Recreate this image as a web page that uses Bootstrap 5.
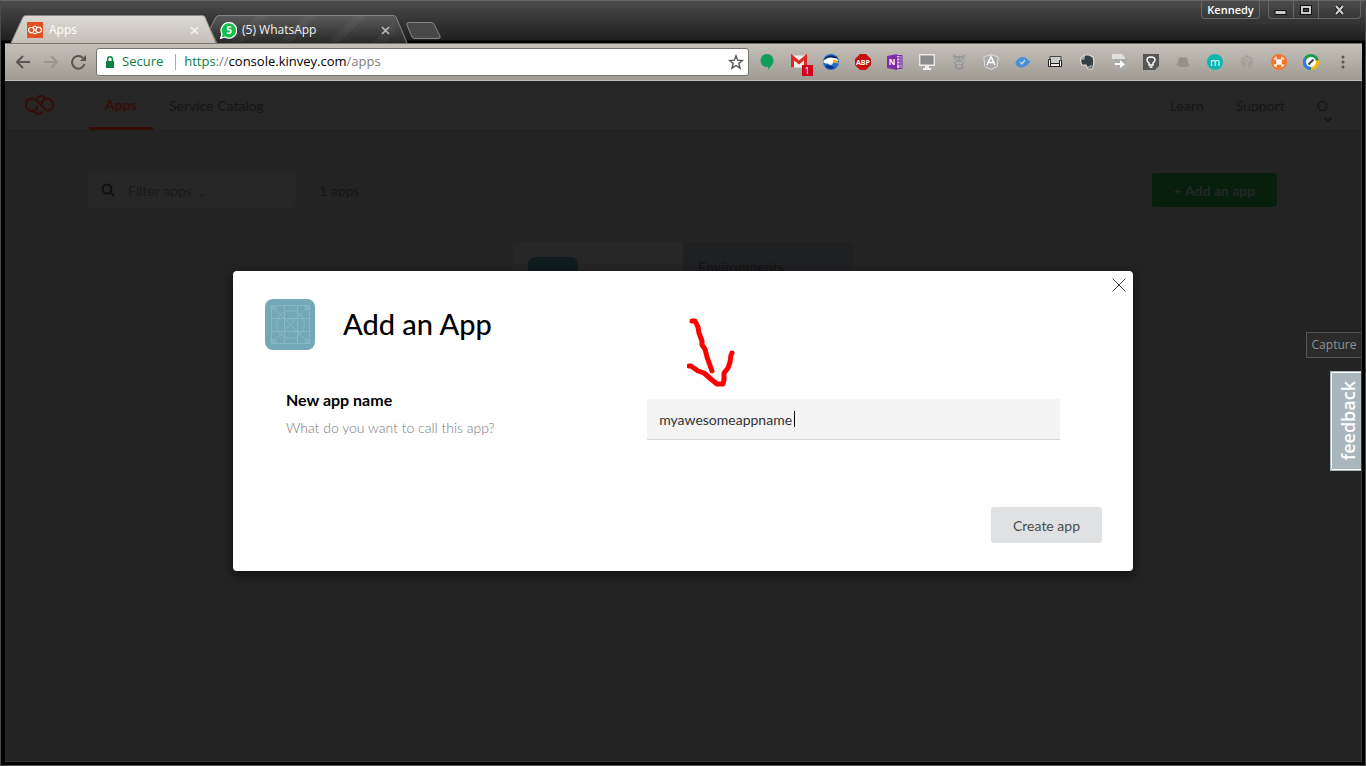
<!DOCTYPE html>
<html lang="en">
<head>
<meta charset="utf-8">
<meta name="viewport" content="width=device-width, initial-scale=1">
<title>Apps</title>
<link href="https://cdn.jsdelivr.net/npm/bootstrap@5.3.0/dist/css/bootstrap.min.css" rel="stylesheet">
<style>
  body { font-family: Lato, "Open Sans", sans-serif; font-size: 14px; background: #000; }
  button { font: inherit; }
  .window { background: #000; border: 1px solid #4a4a4a; border-top-color: #666; }
  .ui-font { font-family: "Open Sans", "Noto Sans", sans-serif; }
  .plain { background: none; border: 0; padding: 0; line-height: 0; }

  /* title bar */
  .titlebar { height: 42px; background: linear-gradient(#4b4b4b, #1f1f1f 39px, #000 40px); }
  .tabs { padding: 14px 0 0 10px; }
  .tab { height: 28px; padding: 2px 18px 0 16px; gap: 6px; font-size: 12px; color: #fff; }
  .tab-on { width: 206px; z-index: 1; }
  .tab-off { width: 198px; margin-left: -7px; padding-left: 10px; gap: 5px; color: #f0f0f0; }
  .tab-shape { inset: 0; width: 100%; height: 100%; z-index: -1; }
  .tab-off, .tab-on { isolation: isolate; }
  .new-tab { margin: 7px 0 0 -2px; }
  .caption { height: 18px; border: 1px solid #666; border-top: 0; border-radius: 0 0 4px 4px; }
  .caption button { display: block; height: 17px; color: #ccc; }
  .caption button + button { border-left: 1px solid #666; }
  .caption .user { width: 57px; font-size: 11px; font-weight: 600; line-height: 17px; color: #fff; }

  /* toolbar */
  .toolbar { height: 38px; margin: 0 3px 0 4px; padding: 0 11px 0 10px; background: linear-gradient(#c5c0b9, #9f9b93); border-top: 1px solid #77736d; border-bottom: 1px solid #b9bdb9; }
  .toolbar svg { display: block; }
  .moves { gap: 13px; }
  .address { height: 28px; background: #fff; border: 1px solid #77746e; border-radius: 3px; font-size: 13px; margin: 0 10px; padding: 0 4px 0 9px; }
  .secure { color: #0b8043; }
  .split { width: 1px; height: 16px; background: #aaa; }
  .url .dim { color: #808080; }

  /* page under the dialog */
  .page { margin: 0 3px 3px 4px; background: #232323; border-right: 1px solid #3a3a3a; border-bottom: 1px solid #3a3a3a; color: #151515; }
  .site-nav { height: 50px; padding: 0 33px 0 20px; background: #262626; border-bottom: 1px solid #202020; }
  .site-nav a { color: #151515; text-decoration: none; padding-bottom: 1px; }
  .site-nav a.current { width: 64px; margin-left: 35px; color: #340d07; font-weight: 700; border-bottom: 3px solid #340d07; padding-bottom: 0; }
  .content { padding: 42px 84px 0; }
  .filter { width: 206px; height: 34px; border: 1px solid #282828; border-radius: 3px; background: #262626; padding: 0 11px; }
  .filter input { background: none; border: 0; min-width: 0; outline: 0; padding: 0 1px; }
  .filter input::placeholder { color: #191919; opacity: 1; }
  .add { width: 125px; height: 34px; border: 0; border-radius: 3px; background: #081f0e; color: #262626; font-weight: 700; }
  .app-tile { width: 340px; height: 150px; margin-top: 35px; }
  .app-tile > div { padding: 15px; }
  .tile-left { background: #262626; }
  .app-tile > .tile-right { padding-top: 14px; background: #1f2022; font-weight: 700; color: #141517; }
  .tile-icon { width: 50px; height: 50px; border-radius: 8px; background: #101c1e; }

  /* dialog */
  .overlay { inset: 0; }
  .dialog { width: 900px; padding: 28px 31px 28px 32px; background: #fff; border-radius: 4px; box-shadow: 0 4px 12px #0009; color: #000; }
  .dialog h1 { font-size: 29px; font-weight: 500; margin: 0; }
  .dialog-close { top: 6px; right: 6px; }
  .fields { display: grid; grid-template-columns: 7fr 8fr; margin: 49px 42px 0 21px; }
  .fields label { font-size: 16px; font-weight: 700; line-height: 20px; margin-top: -9px; }
  .hint { color: #777; font-weight: 300; line-height: 20px; margin-top: 8px; }
  .name-box { height: 41px; background: #f4f4f4; border: 0; border-bottom: 1px solid #d8d8d8; border-radius: 0; padding: 0 12px; color: #333; outline: 0; caret-color: transparent; }
  .text-cursor { left: 147px; top: 12px; width: 1px; height: 16px; background: #000; }
  .create { width: 111px; height: 36px; margin-top: 67px; border: 0; border-radius: 3px; background: #dfe1e3; color: #4c4c4c; }
  .pointer { left: 454px; top: 46px; }

  .capture { right: 0; top: 251px; height: 26px; width: 55px; border: 1px solid #555; border-right: 0; background: #2b2b2b; color: #929292; font-size: 12px; padding: 0; }
  .feedback { right: 0; top: 290px; width: 31px; height: 100px; background: #a9b7bd; border: 1px solid #a9b7bd; border-right: 0; padding: 1px 0 1px 1px; }
  .feedback span { display: flex; align-items: center; justify-content: center; height: 100%; box-shadow: -1px 0 #fff, 0 -1px #fff, 0 1px #fff; color: #fff; font-size: 18px; line-height: 1; padding-left: 3px; }
  .feedback b { writing-mode: vertical-rl; rotate: 180deg; font-weight: 600; }
</style>
</head>
<body>
<div class="window min-vh-100 d-flex flex-column">
  <header class="titlebar d-flex justify-content-between ui-font">
    <div class="tabs d-flex">
      <div class="tab tab-on position-relative d-flex align-items-center">
        <svg class="tab-shape position-absolute" viewBox="0 0 206 28" preserveAspectRatio="none"><defs><linearGradient id="on" x2="0" y2="1"><stop stop-color="#dcd9d3"/><stop offset="1" stop-color="#c5c0b9"/></linearGradient></defs><path d="M0 28L12 2Q13 .5 15 .5H191Q193 .5 194 2L205 28" fill="url(#on)" stroke="#8d8a84"/></svg>
        <svg width="16" height="16" viewBox="0 0 16 16"><path fill="#e05020" d="M0 0h16v16H0z"/><path d="M6 10.500C4 11.500 1.500 10 1.500 8S4 4.800 6 6l4 4c2 1.500 4.500 0 4.500-2S12 4.500 10 5.500M6 5.500Q8 3 10 5.500L9 8M10 10.500Q8 13 6 10.500L7 8" fill="none" stroke="#fff" stroke-width="1.200"/></svg>
        <span class="flex-grow-1">Apps</span>
        <button class="plain" aria-label="Close tab"><svg width="9" height="9" viewBox="0 0 9 9" stroke="#f4f4f4" stroke-width="1.600"><path d="M1 1l7 7M8 1L1 8"/></svg></button>
      </div>
      <div class="tab tab-off position-relative d-flex align-items-center">
        <svg class="tab-shape position-absolute" viewBox="0 0 200 28" preserveAspectRatio="none"><defs><linearGradient id="off" x2="0" y2="1"><stop stop-color="#5c5c5c"/><stop offset="1" stop-color="#282828"/></linearGradient></defs><path d="M7 28L0 14 6 2Q7 .5 9 .5H185Q187 .5 188 2L199 28" fill="url(#off)" stroke="#858585"/><path d="M20 27L46 1h12L32 27M70 27L96 1h12L82 27M120 27l26-26h12l-26 26M165 27l20-20 3 9-11 11" fill="#fff" opacity=".04"/></svg>
        <svg width="17" height="17" viewBox="0 0 17 17"><path d="M9 .700a7.700 7.700 0 11-4 14.300L.7 16.300 2 12A7.700 7.700 0 019 .700z" fill="#12bf48" stroke="#fff" stroke-width="1.300"/><text x="9" y="12" text-anchor="middle" font-family="Open Sans" font-size="10" font-weight="700" fill="#fff">5</text></svg>
        <span class="flex-grow-1">(5) WhatsApp</span>
        <button class="plain" aria-label="Close tab"><svg width="9" height="9" viewBox="0 0 9 9" stroke="#bbb" stroke-width="1.600"><path d="M1 1l7 7M8 1L1 8"/></svg></button>
      </div>
      <button class="plain new-tab d-flex align-self-start" aria-label="New tab"><svg width="36" height="17" viewBox="0 0 36 17"><path d="M3 .5H25Q27 .5 28 2L34 14Q35 16.500 32 16.500H9Q7 16.500 6 15L1 3Q0 .5 3 .5z" fill="#484848" stroke="#858585"/></svg></button>
    </div>
    <div class="d-flex align-items-start gap-2 pe-1">
      <div class="caption"><button class="plain user">Kennedy</button></div>
      <div class="caption d-flex">
        <button class="plain px-1" aria-label="Minimize"><svg width="16" height="14" viewBox="0 0 16 14"><path d="M2 7.500h11v4H2z" fill="#ccc" stroke="#111"/></svg></button>
        <button class="plain px-1" aria-label="Maximize"><svg width="16" height="14" viewBox="0 0 16 14"><path d="M4 4h8v6H4z" fill="none" stroke="#111" stroke-width="4"/><path d="M4 4h8v6H4z" fill="none" stroke="#ccc" stroke-width="2"/></svg></button>
        <button class="plain px-2" aria-label="Close window"><svg width="25" height="14" viewBox="0 0 25 14"><path d="M9 3l7 8M16 3l-7 8" stroke="#111" stroke-width="4"/><path d="M9 3l7 8M16 3l-7 8" stroke="#ccc" stroke-width="2.200"/></svg></button>
      </div>
    </div>
  </header>

  <div class="toolbar d-flex align-items-center ui-font">
    <div class="moves d-flex align-items-center">
      <button class="plain" aria-label="Back"><svg width="16" height="16" viewBox="0 0 16 16" fill="none" stroke="#595651" stroke-width="2"><path d="M15 8H2M8 2L2 8l6 6"/></svg></button>
      <button class="plain" aria-label="Forward"><svg width="14" height="16" viewBox="0 0 14 16" fill="none" stroke="#9b978f" stroke-width="2"><path d="M0 8h12M7 2l6 6-6 6"/></svg></button>
      <button class="plain" aria-label="Reload"><svg width="15" height="16" viewBox="0 0 15 16" fill="none" stroke="#595651" stroke-width="2"><path d="M12 4A6.300 6.300 0 1013.500 10"/><path d="M15 1v6H9z" fill="#595651" stroke="none"/></svg></button>
    </div>
    <div class="address flex-grow-1 d-flex align-items-center gap-2">
      <svg width="8" height="12" viewBox="0 0 8 12"><path d="M0 5h8v7H0z" fill="#0b8043"/><path d="M1.700 5V3a2.300 2.300 0 014.600 0v2" fill="none" stroke="#0b8043" stroke-width="1.400"/></svg>
      <span class="secure">Secure</span>
      <span class="split ms-1"></span>
      <span class="url flex-grow-1" role="textbox" aria-label="Address"><span class="secure">https</span><span class="dim">://</span><span class="text-black">console.kinvey.com</span><span class="dim">/apps</span></span>
      <svg width="16" height="16" viewBox="0 0 16 16" fill="none" stroke="#555" stroke-width="1.400"><path d="M8 1.800l1.700 4.400 4.700.3-3.600 3 1.200 4.600L8 11.500l-4 2.600 1.200-4.600-3.600-3 4.700-.3z"/></svg>
    </div>
    <div class="d-flex gap-3 align-items-center">
      <svg width="16" height="16" viewBox="0 0 16 16"><path d="M8 0c4 0 6.500 3 6.500 6.500 0 4-3.500 6.500-5.500 9.500v-3C4 13 1.500 10 1.500 6.500S4 0 8 0z" fill="#0f9d58"/></svg>
      <svg width="16" height="16" viewBox="0 0 16 16" overflow="visible"><path d="M0 1.500h16v12H0z" fill="#eee"/><path d="M1.500 13.500V3L8 8.500 14.500 3v10.500" fill="none" stroke="#dd2a22" stroke-width="3"/><path d="M11 11h11v11H11z" fill="#d0021b"/><text x="16" y="20" text-anchor="middle" font-family="Open Sans" font-size="9" fill="#fff">1</text></svg>
      <svg width="16" height="16" viewBox="0 0 16 16"><circle cx="8" cy="8" r="8" fill="#1b6fd0"/><path d="M1 5Q6-1 14 3l1 3-6 1Q4 4 1 5z" fill="#0a2350"/><path d="M0 8Q4 2 11 4q4 0 4 3l-5 1q0 3-3 3 0-2-4-1.500z" fill="#fff"/><path d="M10 6q5-1 5.500 4-2-2-5-1z" fill="#f5a722"/><path d="M3 11q5 1 9 2-4 4-9 0z" fill="#0a2f70"/></svg>
      <svg width="16" height="16" viewBox="0 0 16 16"><path d="M5 0h6l5 5v6l-5 5H5l-5-5V5z" fill="#c70d0d"/><text x="8" y="11" text-anchor="middle" font-family="Open Sans" font-size="7" font-weight="700" fill="#fff">ABP</text></svg>
      <svg width="16" height="16" viewBox="0 0 16 16"><path d="M8 1.500h7v13H8" fill="#d9c5e8" stroke="#7b2fa5"/><path d="M10 4h5M10 7h5M10 10h5M13 2v12" stroke="#7b2fa5"/><path d="M0 2l10-2v16L0 14z" fill="#7d2da8"/><text x="5" y="11" text-anchor="middle" font-family="Open Sans" font-size="8" font-weight="700" fill="#fff">N</text></svg>
      <svg width="16" height="16" viewBox="0 0 16 16"><path d="M.7.700h14.600v10.600H.7z" fill="#8c8c8c" stroke="#e8e8e8" stroke-width="1.400"/><path d="M6 12h4v2h2v2H4v-2h2z" fill="#eee"/></svg>
      <svg width="16" height="16" viewBox="0 0 16 16"><path d="M3 0l2 2h6l2-2 1 3-2 2 2 3-2 2 1 4-3 2H6l-3-2 1-4-2-2 2-3-2-2z" fill="#999"/><path d="M5 5h2M9 5h2M5 9h6M6 12h4M3 7h2M11 7h2" stroke="#c4c4c4"/></svg>
      <svg width="16" height="16" viewBox="0 0 16 16"><path d="M8 .5l7.200 2.500-1 9.500L8 15.500 1.800 12.500.8 3z" fill="#aaa" stroke="#ddd"/><path d="M4 11l4-8.500 4 8.500M5.500 8.500h5" fill="none" stroke="#fff" stroke-width="1.500"/></svg>
      <svg width="16" height="16" viewBox="0 0 16 16"><path d="M2 6Q6 1 11 4l4.500 4L11 12q-5 3-9 0-3-3 0-6z" fill="#4590d8"/><path d="M5 8l2 2 3-4" fill="none" stroke="#c9d8e4" stroke-width="1.300"/></svg>
      <svg width="16" height="16" viewBox="0 0 16 16"><path d="M3 9V2.500h11V9" fill="#ccc" stroke="#444"/><path d="M3 9.500h11v3H3z" fill="#eee" stroke="#222"/><path d="M1.500 5.500h2v7h-2zM12.500 6.500h2v6h-2z" fill="#fff" stroke="#222"/></svg>
      <svg width="16" height="16" viewBox="0 0 16 16"><path d="M2 4l4-3h4l4 2q2 7-1 12H9l-2-4H3Q1 8 2 4z" fill="#334045" stroke="#ddd" stroke-width="1.200"/><path d="M2 5h3V2M9 13h3v-2" fill="none" stroke="#ddd"/></svg>
      <svg width="16" height="16" viewBox="0 0 16 16"><path d="M1 0h10l3 3v13H4V5H1z" fill="#e0e0e0"/><path d="M4 5h11v11H4z" fill="#aaa"/><path d="M4 9h5V6l5 4.500L9 14v-3H4z" fill="#fff"/></svg>
      <svg width="16" height="16" viewBox="0 0 16 16"><path d="M0 0h16v12l-4 4H0z" fill="#555"/><path d="M6 11V9Q4 8 4 6q0-3 4-3t4 3q0 2-2 3v2zM6.500 13h3" fill="none" stroke="#fff" stroke-width="1.500"/></svg>
      <svg width="16" height="16" viewBox="0 0 16 16"><path d="M3 9q0-6 3-6l2 .7L10 3q3 0 3 6l2 2q-2 2-7 2T1 10z" fill="#95928d"/></svg>
      <svg width="16" height="16" viewBox="0 0 16 16"><circle cx="8" cy="8" r="8" fill="#0cb6ae"/><text x="8" y="12" text-anchor="middle" font-family="Open Sans" font-size="11" fill="#fff">m</text></svg>
      <svg width="16" height="16" viewBox="0 0 16 16"><path d="M8 1l6 3v8l-6 4-6-4V4z" fill="#a4a19c"/><path d="M2 5l6 3 6-3M8 8v7M5 3l6 3M11 3L5 6" fill="none" stroke="#b4b1ab"/></svg>
      <svg width="16" height="16" viewBox="0 0 16 16"><circle cx="8" cy="8" r="8" fill="#f47529"/><circle cx="8" cy="8" r="2.800" fill="#fff"/><path d="M3 5.500L5.500 3M10.500 3L13 5.500M13 10.500L10.500 13M5.500 13L3 10.500M4 4l3 3M12 4L9 7M12 12L9 9M4 12l3-3" stroke="#fff" stroke-width="1.200"/></svg>
      <svg width="16" height="16" viewBox="0 0 16 16"><circle cx="8" cy="8" r="8" fill="#1c9b50"/><path d="M8 8L1 4a8 8 0 006 12z" fill="#3c78e8"/><path d="M8 8l8-2a8 8 0 01-8 10z" fill="#f8b911"/><circle cx="8" cy="8" r="5" fill="#fff"/><path d="M5.500 10.500l5-5" stroke="#444" stroke-width="2"/></svg>
      <button class="plain" aria-label="Menu"><svg width="16" height="16" viewBox="0 0 16 16" fill="#5a5751"><circle cx="8" cy="3" r="1.500"/><circle cx="8" cy="8" r="1.500"/><circle cx="8" cy="13" r="1.500"/></svg></button>
    </div>
  </div>

  <main class="page flex-grow-1 position-relative">
    <nav class="site-nav d-flex align-items-stretch">
      <a href="#" class="d-flex align-items-center" aria-label="Home"><svg width="29" height="20" viewBox="0 0 29 20" fill="none" stroke="#340d07" stroke-width="2"><path d="M12 6Q10 3.500 7 3.500a6 6 0 000 12.500q3 0 5-2v-3M12 6l8 8q2 2 4 1.500 4-1 4-5.500 0-6-6-6.300-3 0-5 3v2M12 3q3-3.500 7-1l2 2M8 16q3 4 8 2l2-1.500"/></svg></a>
      <a href="#" class="current d-flex align-items-center justify-content-center">Apps</a>
      <a href="#" class="d-flex align-items-center ms-3">Service Catalog</a>
      <div class="d-flex ms-auto gap-2">
        <a href="#" class="d-flex align-items-center me-4">Learn</a>
        <a href="#" class="d-flex align-items-center me-4">Support</a>
        <a href="#" class="d-flex align-items-center position-relative">O
          <svg class="position-absolute top-50 start-100 mt-2 translate-middle-x" width="8" height="12" viewBox="0 0 8 12" fill="none" stroke="#121212" stroke-width="1.500"><path d="M1 4l3 3 3-3"/></svg></a>
      </div>
    </nav>
    <div class="content">
      <div class="d-flex align-items-center">
        <div class="filter d-flex align-items-center gap-2">
          <svg class="flex-shrink-0 me-1" width="14" height="14" viewBox="0 0 14 14" fill="none" stroke="#101010" stroke-width="2"><circle cx="6" cy="6" r="4.500"/><path d="M9 9l4 4"/></svg>
          <input type="text" aria-label="Filter apps" placeholder="Filter apps ...">
        </div>
        <span class="ms-4">1 apps</span>
        <button class="add ms-auto">+ Add an app</button>
      </div>
      <div class="app-tile d-flex mx-auto">
        <div class="tile-left w-50"><div class="tile-icon"></div></div>
        <div class="tile-right w-50">Environments</div>
      </div>
    </div>

    <div class="overlay position-absolute d-flex align-items-center justify-content-center">
      <section class="dialog position-relative" role="dialog" aria-labelledby="dialog-title">
        <button class="dialog-close plain position-absolute" aria-label="Close"><svg width="16" height="16" viewBox="0 0 16 16" stroke="#444" stroke-width="1"><path d="M1.500 1.500l13 13M14.500 1.500l-13 13"/></svg></button>
        <div class="d-flex align-items-center">
          <svg width="50" height="51" viewBox="0 0 50 51"><rect width="50" height="51" rx="8" fill="#73a9b6"/><g fill="none" stroke="#8ab8c2"><rect x="6.500" y="6.500" width="38" height="38" rx="1"/><path d="M19.500 6v39M32.500 6v39M6 19.500h39M6 32.500h39M6 6l39 39M45 6L6 45"/><circle cx="25.500" cy="25.500" r="14"/><circle cx="9" cy="9" r="2"/><circle cx="42" cy="9" r="2"/><circle cx="9" cy="42" r="2"/><circle cx="42" cy="42" r="2"/></g></svg>
          <h1 id="dialog-title" class="ps-4 ms-1">Add an App</h1>
        </div>
        <div class="fields">
          <div>
            <label for="app-name" class="d-block">New app name</label>
            <div class="hint">What do you want to call this app?</div>
          </div>
          <div class="position-relative">
            <input id="app-name" class="name-box w-100" type="text" value="myawesomeappname">
            <span class="text-cursor position-absolute"></span>
          </div>
        </div>
        <div class="d-flex justify-content-end"><button class="create">Create app</button></div>
        <svg class="pointer position-absolute" width="50" height="70" viewBox="0 0 50 70" fill="none" stroke="#f00" stroke-width="5" stroke-linecap="round" stroke-linejoin="round"><path d="M5 4h3l3 6 1 6 3 8v4l3 4 2 8 5 14M2 49h2l7 5 6 2 8 7 5 4h6l1-4V56l4-5 2-6 1-7 1-2"/></svg>
      </section>
    </div>

    <button class="capture position-absolute ui-font">Capture</button>
    <button class="feedback position-absolute ui-font"><span><b>feedback</b></span></button>
  </main>
</div>
<script src="https://cdn.jsdelivr.net/npm/bootstrap@5.3.0/dist/js/bootstrap.bundle.min.js"></script>
</body>
</html>
